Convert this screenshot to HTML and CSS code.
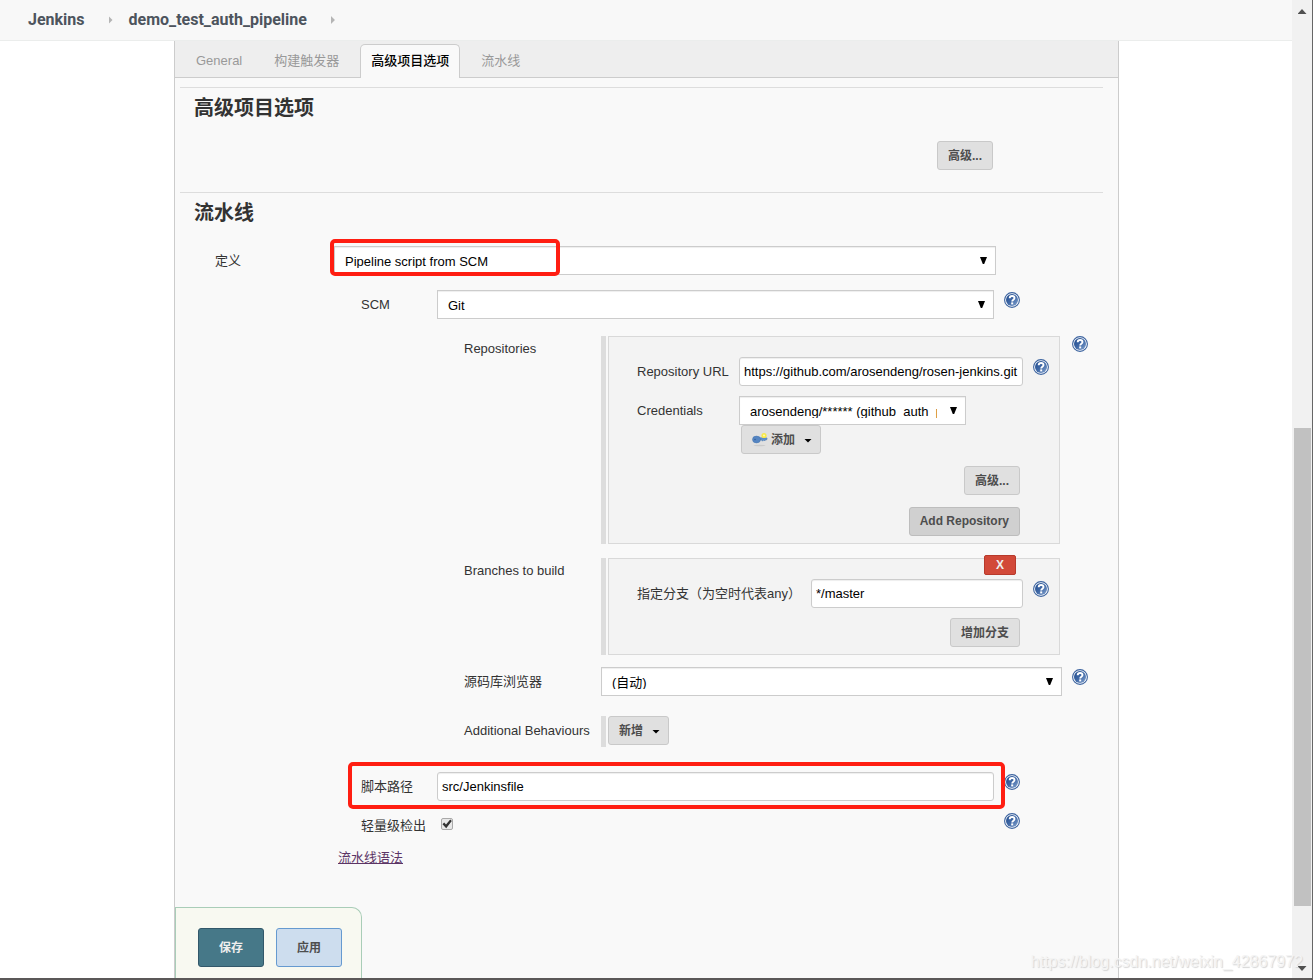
FILE: index.html
```html
<!DOCTYPE html>
<html lang="zh-CN">
<head>
<meta charset="utf-8">
<title>demo_test_auth_pipeline Config [Jenkins]</title>
<link rel="stylesheet" href="styles.css">
</head>
<body>
<svg class="defs" aria-hidden="true">
  <defs>
    <linearGradient id="ball" x1="0" y1="0" x2="1" y2="1">
      <stop offset="0" stop-color="#1f4a8c"/>
      <stop offset=".5" stop-color="#3f68a6"/>
      <stop offset="1" stop-color="#87a5cf"/>
    </linearGradient>
    <symbol id="help" viewBox="0 0 16 16">
      <circle cx="8" cy="8" r="7.4" fill="#fff" stroke="#3c639f" stroke-width="1.1"/>
      <circle cx="8" cy="8" r="6" fill="url(#ball)"/>
      <path d="M5.700 6.300C5.700 4.600 6.700 4 8.100 4s2.400.7 2.400 2c0 1.600-2.300 1.700-2.300 3.400" fill="none" stroke="#fff" stroke-width="1.900"/>
      <rect x="7.200" y="10.400" width="2" height="2" fill="#fff"/>
    </symbol>
  </defs>
</svg>
<div class="window">
  <div class="page">
    <nav class="breadcrumbs">
      <a href="#">Jenkins</a><span class="chevron"></span>
      <a href="#">demo_test_auth_pipeline</a><span class="chevron"></span>
    </nav>
    <main class="panel">
      <div class="tabs">
        <a class="tab" href="#">General</a>
        <a class="tab" href="#">构建触发器</a>
        <a class="tab active" href="#">高级项目选项</a>
        <a class="tab" href="#">流水线</a>
      </div>
      <form class="config">
        <section class="section">
          <h2>高级项目选项</h2>
          <div class="section-actions"><button class="btn" type="button">高级...</button></div>
        </section>
        <section class="section">
          <h2>流水线</h2>
          <div class="row row-definition">
            <label for="definition">定义</label>
            <div class="select marked-choice">
              <select id="definition"><option>Pipeline script from SCM</option></select>
            </div>
          </div>
          <div class="row row-scm">
            <label for="scm">SCM</label>
            <div class="select"><select id="scm"><option>Git</option></select></div>
            <a class="help" href="#" aria-label="Help"><svg><use href="#help"/></svg></a>
          </div>

          <div class="row row-git repositories">
            <span class="group-label">Repositories</span>
            <div class="chunk">
              <div class="box">
                <div class="field">
                  <label for="url">Repository URL</label>
                  <input class="text" id="url" type="text" value="https://github.com/arosendeng/rosen-jenkins.git">
                  <a class="help" href="#" aria-label="Help"><svg><use href="#help"/></svg></a>
                </div>
                <div class="field credentials">
                  <label for="cred">Credentials</label>
                  <div>
                    <div class="select narrow"><select id="cred"><option>arosendeng/****** (github_auth_pipeline)</option></select></div>
                    <button class="btn add-cred" type="button"><svg class="key" viewBox="0 0 16 16"><ellipse cx="7.500" cy="14.500" rx="6" ry=".8" fill="#cbcbcb"/><path d="M6 6.800h8.500l.7 1-.7 1.200h-1l-1 1-1-1-1 1.200-1-1.200H6z" fill="#5f91cb" stroke="#4676b0" stroke-width=".5"/><ellipse cx="4.500" cy="8.500" rx="4" ry="3.400" fill="#5585c2" stroke="#4474ae" stroke-width=".5"/><circle cx="3" cy="8.500" r=".8" fill="#315f9b"/><circle cx="12" cy="4.500" r="2.600" fill="#f7e84a"/><circle cx="12" cy="4.500" r="1" fill="#fffbb0"/></svg>添加<span class="caret"></span></button>
                  </div>
                </div>
                <div class="actions"><button class="btn" type="button">高级...</button></div>
                <div class="actions"><button class="btn dark" type="button">Add Repository</button></div>
              </div>
            </div>
            <a class="help" href="#" aria-label="Help"><svg><use href="#help"/></svg></a>
          </div>

          <div class="row row-git branches">
            <span class="group-label">Branches to build</span>
            <div class="chunk">
              <div class="box">
                <button class="delete" type="button">X</button>
                <div class="field wide">
                  <label for="branch">指定分支（为空时代表any）</label>
                  <input class="text" id="branch" type="text" value="*/master">
                  <a class="help" href="#" aria-label="Help"><svg><use href="#help"/></svg></a>
                </div>
                <div class="actions"><button class="btn" type="button">增加分支</button></div>
              </div>
            </div>
          </div>

          <div class="row row-git browser">
            <label for="browser">源码库浏览器</label>
            <div class="select"><select id="browser"><option>(自动)</option></select></div>
            <a class="help" href="#" aria-label="Help"><svg><use href="#help"/></svg></a>
          </div>

          <div class="row row-git behaviours">
            <span class="line-label">Additional Behaviours</span>
            <div class="chunk"><button class="btn" type="button">新增<span class="caret"></span></button></div>
          </div>

          <div class="row row-scm script-path">
            <label for="path">脚本路径</label>
            <input class="text" id="path" type="text" value="src/Jenkinsfile">
            <a class="help" href="#" aria-label="Help"><svg><use href="#help"/></svg></a>
          </div>
          <div class="row row-scm light">
            <label for="light">轻量级检出</label>
            <div class="check"><input id="light" type="checkbox" checked></div>
            <a class="help" href="#" aria-label="Help"><svg><use href="#help"/></svg></a>
          </div>
          <a class="syntax" href="#">流水线语法</a>
        </section>
      </form>
      <div class="save-bar">
        <button class="big save" type="submit">保存</button>
        <button class="big apply" type="button">应用</button>
      </div>
    </main>
  </div>
  <div class="scrollbar" aria-hidden="true">
    <span class="arrow up"></span>
    <div class="track"><div class="thumb"></div></div>
    <span class="arrow down"></span>
  </div>
  <div class="watermark">https://blog.csdn.net/weixin_42867972</div>
</div>
</body>
</html>
```

FILE: styles.css
```css
*, *::before, *::after { box-sizing: border-box; }

body {
  margin: 0;
  background: #fff;
  color: #333;
  font: 13px/20px "Liberation Sans", "Noto Sans CJK SC", sans-serif;
}

a { color: inherit; text-decoration: none; }
button, input, select { font-family: inherit; margin: 0; }
.defs { position: absolute; width: 0; height: 0; }

.window {
  position: relative;
  display: flex;
  min-height: 100vh;
  border-right: 1px solid #666;
  border-bottom: 2px solid #5b5858;
}
.page { flex: 1; min-width: 0; display: flex; flex-direction: column; }

/* Breadcrumbs */
.breadcrumbs {
  display: flex;
  align-items: center;
  height: 41px;
  padding-left: 28px;
  background: #f8f8f8;
  border-bottom: 1px solid #ebedec;
  color: #4d545d;
  font: bold 16px/20px Roboto, sans-serif;
}
.chevron {
  width: 4px;
  height: 8px;
  margin: 0 16px 0 24px;
  background: #b5b5b5;
  clip-path: polygon(0 0, 100% 50%, 0 100%);
}

/* Panel and tabs */
.panel {
  flex: 1;
  display: flex;
  flex-direction: column;
  margin: 0 173px 0 174px;
  background: #f9f9f9;
  border: solid #ccc;
  border-width: 0 1px;
}
.tabs {
  display: flex;
  align-items: flex-end;
  gap: 10px;
  height: 37px;
  padding-left: 10px;
  background: #eee;
  border-bottom: 1px solid #ccc;
}
.tab {
  height: 34px;
  padding: 0 10px;
  border: 1px solid transparent;
  border-bottom: 0;
  line-height: 34px;
  color: #999;
}
.tab.active {
  margin-bottom: -1px;
  background: #f9f9f9;
  border-color: #ccc;
  border-radius: 5px 5px 0 0;
  line-height: 32px;
  color: #000;
  font-weight: 500;
}

.config { margin: 9px 15px 0 5px; }
.section { border-top: 1px solid #ddd; }
.section h2 {
  margin: 0;
  padding: 10px 0 23px 14px;
  font-size: 20px;
  line-height: 20px;
}
.section-actions { display: flex; justify-content: flex-end; padding: 0 110px 22px 0; }

/* Form rows */
.row { display: grid; align-items: start; column-gap: 10px; }
.row label, .line-label { line-height: 29px; white-space: nowrap; }
.group-label { line-height: 26px; }
.row-definition { grid-template-columns: 109px 1fr; padding: 0 107px 0 35px; }
.row-scm { grid-template-columns: 66px 1fr 16px; margin-top: 15px; padding: 0 83px 0 181px; }
.row-git { grid-template-columns: 127px 1fr 16px; padding: 0 15px 0 284px; }
.repositories { margin-top: 17px; }
.branches { margin-top: 14px; }
.browser { margin-top: 12px; }
.behaviours { margin-top: 20px; }

.chunk {
  margin-right: 2px;
  padding-left: 2px;
  border-left: 5px solid #ddd;
}
.row > .help { margin-top: 2px; }
.repositories > .help { margin-top: 0; }
.help, .help svg { display: block; width: 16px; height: 16px; }

.box {
  position: relative;
  padding: 20px 10px 7px 28px;
  background: #f3f3f3;
  border: 1px solid #d9d9d9;
}
.field { display: grid; grid-template-columns: 92px 1fr 16px; column-gap: 10px; align-items: start; }
.field.wide { grid-template-columns: 164px 1fr 16px; }
.field .help { margin-top: 2px; }
.credentials { margin-top: 10px; margin-bottom: 12px; }
.actions { display: flex; justify-content: flex-end; margin: 0 29px 0 0; }
.actions + .actions { margin-top: 12px; }
.field.wide + .actions { margin-top: 10px; }

/* Controls */
.text {
  width: 100%;
  height: 29px;
  padding: 0 4px;
  border: 1px solid #ccc;
  border-radius: 3px;
  background: #fff;
  box-shadow: inset 0 1px 1px #eee;
  color: #000;
  font-size: 13px;
}
.select { position: relative; }
.select select {
  display: block;
  width: 100%;
  height: 29px;
  padding: 7px 28px 6px 10px;
  appearance: none;
  border: 1px solid #ccc;
  border-radius: 0;
  background: #fff;
  box-shadow: inset 0 1px 1px #eee;
  color: #000;
  font-size: 13px;
}
.select::after {
  content: "";
  position: absolute;
  top: 11px;
  right: 9px;
  width: 7px;
  height: 7px;
  background: #000;
  clip-path: polygon(0 0, 100% 0, 60% 100%, 40% 100%);
  pointer-events: none;
}
.select.narrow { width: 227px; }

.btn {
  display: flex;
  align-items: center;
  height: 29px;
  padding: 0 10px 2px;
  background: #e0e0e0;
  border: 1px solid #c9c9c9;
  border-radius: 3px;
  color: #4d4d4d;
  font-size: 12px;
  font-weight: bold;
  white-space: nowrap;
}
.btn.dark { background: #d0d0d0; border-color: #bdbdbd; }
.add-cred { margin-left: 2px; }
.key { width: 16px; height: 16px; margin-right: 3px; }
.caret {
  width: 8px;
  height: 4px;
  margin: 4px -2px 0 9px;
  background: #000;
  clip-path: polygon(0 0, 100% 0, 50% 100%);
}
.delete {
  position: absolute;
  top: -4px;
  right: 43px;
  width: 32px;
  height: 20px;
  padding: 0;
  background: #d24939;
  border: 1px solid #b73a2c;
  border-radius: 2px;
  color: #eee;
  font-size: 12px;
  font-weight: bold;
}
.behaviours .chunk { padding-bottom: 2px; }

/* Highlight frames */
.marked-choice::before, .script-path::before {
  content: "";
  position: absolute;
  z-index: 1;
  border: 4px solid #ff1e12;
  border-radius: 5px;
  pointer-events: none;
}
.marked-choice::before { top: -7px; left: -4px; width: 230px; height: 37px; }
.script-path { position: relative; margin-top: 25px; }
.script-path::before { top: -10px; bottom: -8px; left: 168px; right: 98px; }

.light { margin-top: 10px; }
.check { display: flex; align-items: center; height: 26px; padding-left: 4px; }
.check input {
  display: grid;
  place-items: center;
  appearance: none;
  width: 12px;
  height: 12px;
  background: #e8e8e8;
  border: 1px solid #a9a9a9;
  border-radius: 2px;
}
.check input:checked::before {
  content: "";
  width: 10px;
  height: 10px;
  background: #333;
  clip-path: polygon(5% 52%, 22% 36%, 40% 56%, 82% 5%, 98% 20%, 42% 92%);
}
.syntax {
  display: inline-block;
  margin: 8px 0 20px 158px;
  color: #5c3566;
  text-decoration: underline;
}

/* Save bar */
.save-bar {
  position: sticky;
  bottom: 0;
  align-self: flex-start;
  display: flex;
  gap: 12px;
  margin-top: auto;
  padding: 20px 19px 11px 22px;
  background: #f8f9f1;
  border: 1px solid #a9cdb8;
  border-bottom: 0;
  border-top-right-radius: 10px;
}
.big {
  width: 66px;
  height: 39px;
  padding: 0 0 2px;
  border-radius: 3px;
  font-size: 12px;
  font-weight: bold;
}
.save { background: #467888; border: 1px solid #32586a; color: #eee; }
.apply { background: #cdddee; border: 1px solid #669ad0; color: #4d4d4d; }

/* Scrollbar */
.scrollbar {
  display: flex;
  flex-direction: column;
  align-items: center;
  width: 20px;
  padding: 9px 0 7px;
  background: #f1f1f1;
}
.arrow { width: 9px; height: 5px; background: #505050; }
.up { clip-path: polygon(50% 0, 100% 100%, 0 100%); }
.down { position: relative; z-index: 1; clip-path: polygon(0 0, 100% 0, 50% 100%); }
.track { flex: 1; display: flex; flex-direction: column; align-self: stretch; padding: 0 1px 0 2px; }
.track::before { content: ""; flex: 414; }
.thumb { flex: 478; background: #c1c1c1; }
.track::after { content: ""; flex: 60; }

.watermark {
  position: absolute;
  right: 9px;
  bottom: 6px;
  color: #f4f4f4;
  font-size: 16px;
  text-shadow: 1px 1px 1px #d4d4d4;
  pointer-events: none;
}
```
